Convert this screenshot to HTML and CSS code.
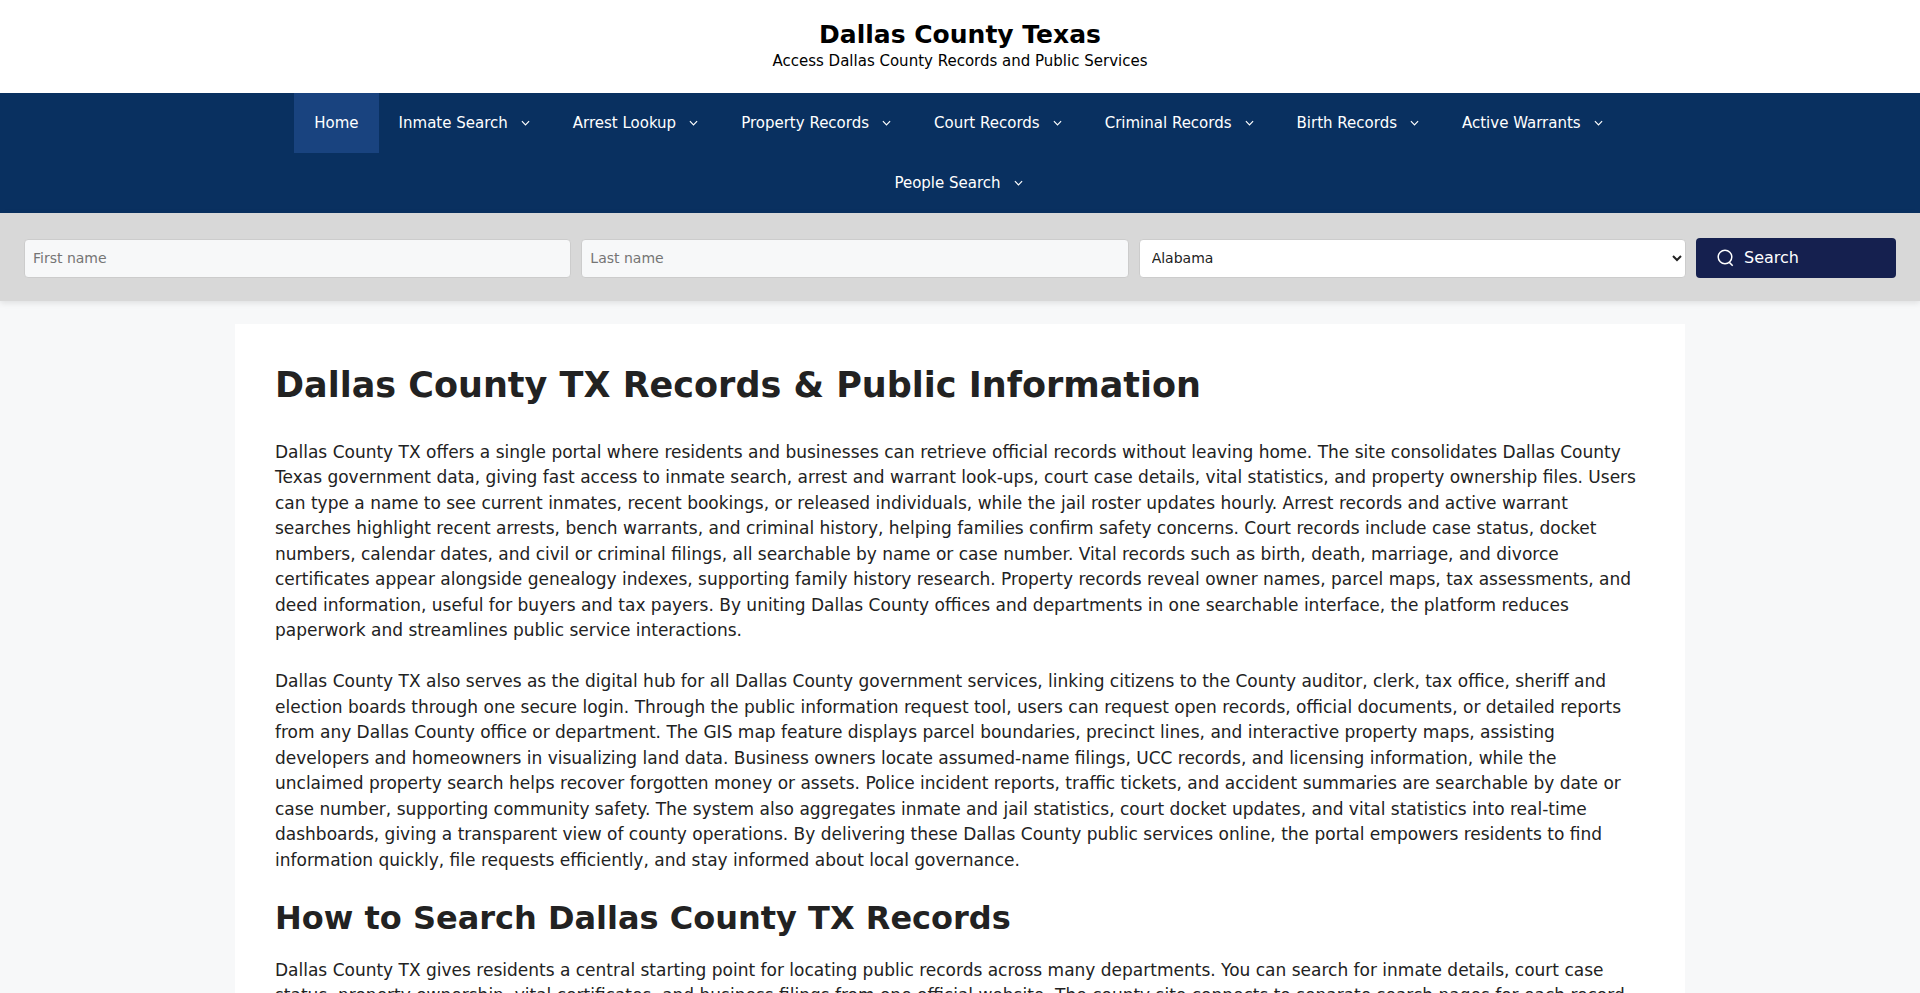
FILE: index.html
```html
<!DOCTYPE html>
<html lang="en">
<head>
<meta charset="utf-8">
<title>Dallas County Texas</title>
<link rel="stylesheet" href="styles.css">
</head>
<body>
<header class="site-header">
  <p class="site-title">Dallas County Texas</p>
  <p class="site-tagline">Access Dallas County Records and Public Services</p>
</header>
<nav class="main-nav">
  <ul class="nav-list">
    <li><a class="nav-link nav-current">Home</a></li>
    <li><a class="nav-link">Inmate Search<svg class="caret" viewBox="0 0 10 6"><path d="M1 1l4 4 4-4"/></svg></a></li>
    <li><a class="nav-link">Arrest Lookup<svg class="caret" viewBox="0 0 10 6"><path d="M1 1l4 4 4-4"/></svg></a></li>
    <li><a class="nav-link">Property Records<svg class="caret" viewBox="0 0 10 6"><path d="M1 1l4 4 4-4"/></svg></a></li>
    <li><a class="nav-link">Court Records<svg class="caret" viewBox="0 0 10 6"><path d="M1 1l4 4 4-4"/></svg></a></li>
    <li><a class="nav-link">Criminal Records<svg class="caret" viewBox="0 0 10 6"><path d="M1 1l4 4 4-4"/></svg></a></li>
    <li><a class="nav-link">Birth Records<svg class="caret" viewBox="0 0 10 6"><path d="M1 1l4 4 4-4"/></svg></a></li>
    <li><a class="nav-link">Active Warrants<svg class="caret" viewBox="0 0 10 6"><path d="M1 1l4 4 4-4"/></svg></a></li>
    <li><a class="nav-link">People Search<svg class="caret" viewBox="0 0 10 6"><path d="M1 1l4 4 4-4"/></svg></a></li>
  </ul>
</nav>
<form class="search-bar">
  <input class="field field-name" type="text" placeholder="First name">
  <input class="field field-name" type="text" placeholder="Last name">
  <select class="field field-state"><option>Alabama</option></select>
  <button class="search-btn" type="button"><svg class="search-icon" viewBox="0 0 18 18"><circle cx="8" cy="9" r="6.8"/><path d="M12.3 14.4l3.4 3.4"/></svg>Search</button>
</form>
<main class="card">
  <h1>Dallas County TX Records &amp; Public Information</h1>
  <p>Dallas County TX offers a single portal where residents and businesses can retrieve official records without leaving home. The site consolidates Dallas County Texas government data, giving fast access to inmate search, arrest and warrant look-ups, court case details, vital statistics, and property ownership files. Users can type a name to see current inmates, recent bookings, or released individuals, while the jail roster updates hourly. Arrest records and active warrant searches highlight recent arrests, bench warrants, and criminal history, helping families confirm safety concerns. Court records include case status, docket numbers, calendar dates, and civil or criminal filings, all searchable by name or case number. Vital records such as birth, death, marriage, and divorce certificates appear alongside genealogy indexes, supporting family history research. Property records reveal owner names, parcel maps, tax assessments, and deed information, useful for buyers and tax payers. By uniting Dallas County offices and departments in one searchable interface, the platform reduces paperwork and streamlines public service interactions.</p>
  <p>Dallas County TX also serves as the digital hub for all Dallas County government services, linking citizens to the County auditor, clerk, tax office, sheriff and election boards through one secure login. Through the public information request tool, users can request open records, official documents, or detailed reports from any Dallas County office or department. The GIS map feature displays parcel boundaries, precinct lines, and interactive property maps, assisting developers and homeowners in visualizing land data. Business owners locate assumed-name filings, UCC records, and licensing information, while the unclaimed property search helps recover forgotten money or assets. Police incident reports, traffic tickets, and accident summaries are searchable by date or case number, supporting community safety. The system also aggregates inmate and jail statistics, court docket updates, and vital statistics into real-time dashboards, giving a transparent view of county operations. By delivering these Dallas County public services online, the portal empowers residents to find information quickly, file requests efficiently, and stay informed about local governance.</p>
  <h2>How to Search Dallas County TX Records</h2>
  <p>Dallas County TX gives residents a central starting point for locating public records across many departments. You can search for inmate details, court case status, property ownership, vital certificates, and business filings from one official website. The county site connects to separate search pages for each record type, so you can quickly reach the office that holds the information you need.</p>
</main>
</body>
</html>
```
FILE: styles.css
```css
* { box-sizing: border-box; }
html, body { margin: 0; height: 993px; overflow: hidden; }
body { background: #f7f8f9; color: #222; font-family: "DejaVu Sans", sans-serif; font-size: 17px; line-height: 1.5; }
.site-header { background: #fff; height: 93px; padding-top: 20px; text-align: center; color: #000; }
.site-title { margin: 0; font-size: 25px; font-weight: 700; line-height: 30px; }
.site-tagline { margin: 0; font-size: 15px; line-height: 22px; }
.main-nav { background: #093060; }
.nav-list { list-style: none; margin: 0 auto; padding: 0; width: 1400px; display: flex; flex-wrap: wrap; justify-content: center; }
.nav-link { display: flex; align-items: center; height: 60px; padding: 0 20px; color: #fff; font-size: 15px; }
.nav-current { background: #19437f; }
.caret { width: 9px; height: 6px; margin-left: 13px; margin-right: 3px; fill: none; stroke: #fff; stroke-width: 1.3; }
.search-bar { display: flex; gap: 10px; align-items: center; height: 88px; padding: 2px 24px 0; background: #d8d8d8; box-shadow: 0 2px 6px rgba(0,0,0,.1); }
.field { flex: 1 1 0; min-width: 0; height: 39px; border: 1px solid #ccc; border-radius: 4px; font-family: inherit; font-size: 14px; color: #222; }
.field-name { background: #f7f8f9; padding: 0 8px; }
.field-name::placeholder { color: #757575; }
.field-state { background: #fff; padding: 0 8px; }
.search-btn { flex: 0 0 200px; display: flex; align-items: center; height: 40px; padding: 0 21px 2px; border: 0; border-radius: 4px; background: #15204f; color: #fff; font-family: inherit; font-size: 16px; }
.search-icon { width: 18px; height: 18px; margin-right: 9px; fill: none; stroke: #fff; stroke-width: 1.5; overflow: visible; }
.card { width: 1450px; margin: 23px auto 0; padding: 40px; background: #fff; }
h1 { margin: 0 0 33.5px; font-size: 35px; line-height: 42px; font-weight: 700; color: #222; }
h2 { margin: 0 0 21px; font-size: 32px; line-height: 38px; font-weight: 700; color: #222; }
.card p { margin: 0 0 25.5px; }
```
